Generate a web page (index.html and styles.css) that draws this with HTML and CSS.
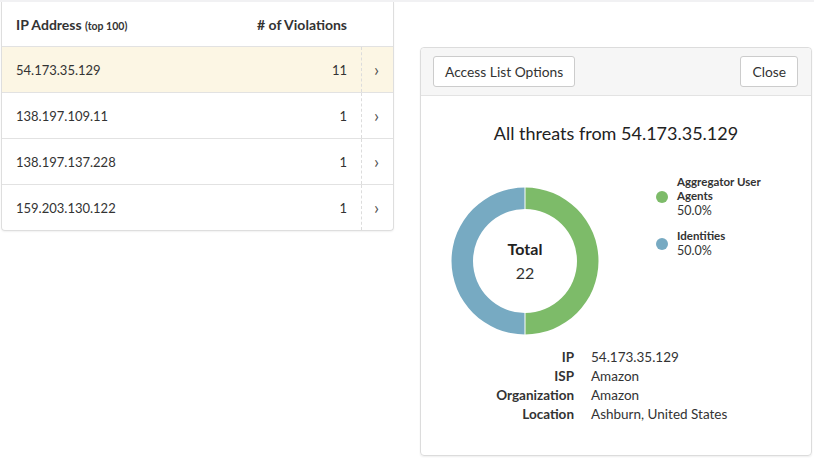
FILE: index.html
```html
<!DOCTYPE html>
<html>
<head>
<meta charset="utf-8">
<link rel="stylesheet" href="styles.css">
</head>
<body>
<div class="strip"></div>
<div class="page">
  <div class="card">
    <div class="thead">
      <div class="c-ip">IP Address <span class="small">(top 100)</span></div>
      <div class="c-num">#&nbsp;of Violations</div>
      <div class="c-arr"></div>
    </div>
    <div class="row active">
      <div class="c-ip">54.173.35.129</div>
      <div class="c-num">11</div>
      <div class="c-arr">&rsaquo;</div>
    </div>
    <div class="row">
      <div class="c-ip">138.197.109.11</div>
      <div class="c-num">1</div>
      <div class="c-arr">&rsaquo;</div>
    </div>
    <div class="row">
      <div class="c-ip">138.197.137.228</div>
      <div class="c-num">1</div>
      <div class="c-arr">&rsaquo;</div>
    </div>
    <div class="row last">
      <div class="c-ip">159.203.130.122</div>
      <div class="c-num">1</div>
      <div class="c-arr">&rsaquo;</div>
    </div>
  </div>

  <div class="panel">
    <div class="phead">
      <button class="btn">Access List Options</button>
      <button class="btn">Close</button>
    </div>
    <div class="pbody">
      <h2 class="title">All threats from 54.173.35.129</h2>
      <div class="chart">
        <div class="donut">
          <svg width="150" height="150" viewBox="0 0 150 150">
            <path d="M75 1.5 A73.5 73.5 0 0 1 75 148.5 L75 127 A52 52 0 0 0 75 23 Z" fill="#7dbb69"/>
            <path d="M75 1.5 A73.5 73.5 0 0 0 75 148.5 L75 127 A52 52 0 0 1 75 23 Z" fill="#77aac2"/>
            <line x1="75" y1="0" x2="75" y2="24" stroke="#fff" stroke-width="1"/>
            <line x1="75" y1="126" x2="75" y2="150" stroke="#fff" stroke-width="1"/>
          </svg>
          <div class="dlabel">
            <div class="dt">Total</div>
            <div class="dn">22</div>
          </div>
        </div>
        <div class="legend">
          <div class="li">
            <span class="dot green"></span>
            <div class="ltxt"><div class="lname">Aggregator User<br>Agents</div><div class="lpct">50.0%</div></div>
          </div>
          <div class="li">
            <span class="dot blue"></span>
            <div class="ltxt"><div class="lname">Identities</div><div class="lpct">50.0%</div></div>
          </div>
        </div>
      </div>
      <div class="info">
        <div class="k">IP</div><div class="v">54.173.35.129</div>
        <div class="k">ISP</div><div class="v">Amazon</div>
        <div class="k">Organization</div><div class="v">Amazon</div>
        <div class="k">Location</div><div class="v">Ashburn, United States</div>
      </div>
    </div>
  </div>
</div>
</body>
</html>
```

FILE: styles.css
```css
* { box-sizing: border-box; }
html, body { margin: 0; padding: 0; background: #fff; }
body {
  font-family: Lato, "Open Sans", "Liberation Sans", sans-serif;
  color: #333;
  font-size: 13px;
  width: 814px;
  height: 463px;
  overflow: hidden;
}
.strip { height: 2px; background: #f1f1f3; }
.page {
  display: flex;
  align-items: flex-start;
  padding-left: 1px;
}
.card {
  width: 393px;
  border: 1px solid #dedede;
  border-top: none;
  border-radius: 0 0 4px 4px;
  box-shadow: 0 1px 2px rgba(0,0,0,0.06);
}
.thead, .row {
  display: flex;
  align-items: center;
}
.thead {
  height: 45px;
  font-weight: 700;
  font-size: 14px;
  border-bottom: 1px solid #e2e2e2;
}
.thead .small { font-size: 10.5px; }
.row {
  height: 46px;
  border-bottom: 1px solid #e2e2e2;
  font-size: 13px;
}
.row.last { border-bottom: none; height: 45px; }
.row.active { background: #fcf6e4; }
.c-ip { flex: 1; padding-left: 14px; }
.c-num { padding-right: 14px; text-align: right; }
.thead .c-num { padding-right: 14px; }
.c-arr {
  width: 32px;
  align-self: stretch;
  display: flex;
  align-items: center;
  justify-content: center;
  font-size: 18px;
  color: #555;
  padding-bottom: 2px;
  padding-right: 2px;
}
.row .c-arr { border-left: 1px dashed #dcdcdc; }
.thead .c-arr { width: 32px; }

.panel {
  margin-left: 26px;
  margin-top: 45px;
  width: 392px;
  height: 409px;
  border: 1px solid #dcdcdc;
  border-radius: 4px;
  box-shadow: 0 1px 2px rgba(0,0,0,0.07);
  display: flex;
  flex-direction: column;
}
.phead {
  height: 48px;
  background: #f6f6f6;
  border-bottom: 1px solid #e3e3e3;
  border-radius: 4px 4px 0 0;
  display: flex;
  align-items: center;
  justify-content: space-between;
  padding: 0 13px 0 12px;
}
.btn {
  font-family: inherit;
  font-size: 13.8px;
  color: #333;
  background: #fff;
  border: 1px solid #ccc;
  border-radius: 3px;
  height: 31px;
  padding: 0 11px;
}
.pbody { flex: 1; position: relative; }
.title {
  margin: 26px 0 0;
  text-align: center;
  font-weight: 400;
  font-size: 18px;
  color: #222;
}
.chart {
  display: flex;
  align-items: flex-start;
  margin-top: 37px;
  padding-left: 29px;
}
.donut {
  position: relative;
  width: 150px;
  height: 150px;
  margin-top: 5px;
}
.donut svg { display: block; }
.dlabel {
  position: absolute;
  inset: 0;
  display: flex;
  flex-direction: column;
  align-items: center;
  justify-content: center;
  padding-bottom: 2px;
}
.dt { font-weight: 700; font-size: 16px; color: #222; }
.dn { font-size: 16px; margin-top: 5px; }
.legend {
  margin-left: 56px;
  margin-top: -6px;
  display: flex;
  flex-direction: column;
  gap: 11px;
}
.li { display: flex; align-items: center; gap: 9px; }
.dot { width: 12px; height: 12px; border-radius: 50%; flex: none; }
.dot.green { background: #7dbb69; }
.dot.blue { background: #77aac2; }
.lname { font-weight: 700; font-size: 11.5px; line-height: 14px; color: #333; }
.lpct { font-size: 12.5px; line-height: 15px; }
.info {
  display: grid;
  grid-template-columns: 153px auto;
  column-gap: 17px;
  row-gap: 0;
  margin-top: 12px;
  font-size: 13.5px;
  line-height: 19px;
}
.info .k { text-align: right; font-weight: 700; }
```
